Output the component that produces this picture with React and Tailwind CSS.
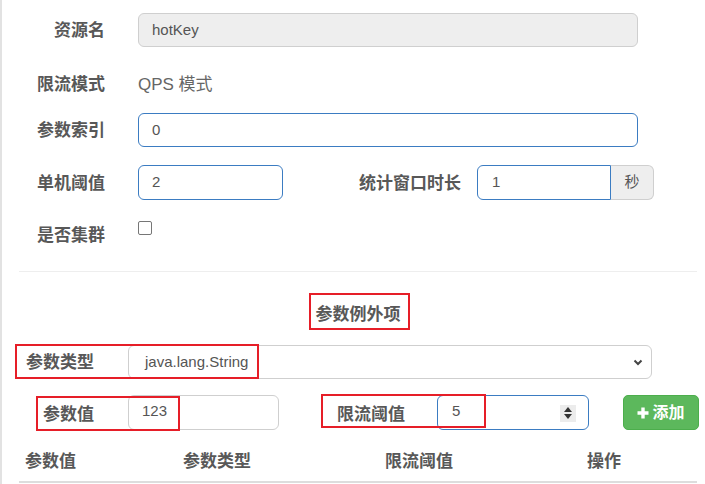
import React from "react";

const Label = ({ children, w = "w-[103px]" }) => (
  <div className={`${w} shrink-0 text-right text-[17px] font-bold text-[#585858] leading-[20px]`}>{children}</div>
);

export default function App() {
  return (
    <div className="relative w-[705px] h-[484px] overflow-hidden bg-white border-l-2 border-[#e2e2e2] font-['Liberation_Sans','Noto_Sans_CJK_SC',sans-serif]">
      <div className="flex flex-col pt-[13px]">
        {/* 资源名 */}
        <div className="flex items-center h-[34px]">
          <div className="mt-[2px]"><Label>资源名</Label></div>
          <div className="ml-[33px] w-[500px] h-[34px] flex items-center px-[13px] rounded-[6px] border border-[#cfcfcf] bg-[#eeeeee] text-[15px] text-[#555]">hotKey</div>
        </div>
        {/* 限流模式 */}
        <div className="flex items-center h-[34px] mt-[21px]">
          <Label>限流模式</Label>
          <div className="ml-[33px] text-[17px] text-[#666] leading-[20px]">QPS 模式</div>
        </div>
        {/* 参数索引 */}
        <div className="flex items-center h-[34px] mt-[11px]">
          <div className="mt-[2px]"><Label>参数索引</Label></div>
          <div className="ml-[33px] w-[500px] h-[34px] flex items-center px-[13px] rounded-[6px] border border-[#3b7cc2] bg-white text-[15px] text-[#555]">0</div>
        </div>
        {/* 单机阈值 / 统计窗口时长 */}
        <div className="flex items-center h-[35px] mt-[18px]">
          <div className="mt-[2px]"><Label>单机阈值</Label></div>
          <div className="ml-[33px] w-[145px] h-[35px] flex items-center px-[13px] rounded-[6px] border border-[#3b7cc2] bg-white text-[15px] text-[#555]">2</div>
          <div className="ml-[76px] mt-[2px] text-[17px] font-bold text-[#585858] leading-[20px] whitespace-nowrap">统计窗口时长</div>
          <div className="ml-[16px] flex h-[35px]">
            <div className="w-[134px] h-[35px] flex items-center px-[14px] rounded-l-[6px] border border-[#3b7cc2] bg-white text-[15px] text-[#555]">1</div>
            <div className="w-[43px] h-[35px] flex items-center justify-center rounded-r-[6px] border border-l-0 border-[#cfcfcf] bg-[#eeeeee] text-[15px] text-[#555]">秒</div>
          </div>
        </div>
        {/* 是否集群 */}
        <div className="flex items-start h-[34px] mt-[21px]">
          <div className="mt-[5px]"><Label>是否集群</Label></div>
          <div className="ml-[33px] w-[14px] h-[14px] rounded-[2px] border border-[#767676] bg-white"></div>
        </div>
        {/* divider */}
        <div className="ml-[17px] w-[678px] h-px bg-[#eeeeee] mt-[16px]"></div>
        {/* title */}
        <div className="ml-[17px] w-[678px] h-[34px] mt-[26px] flex items-center justify-center text-[17px] font-bold text-[#585858]">参数例外项</div>
        {/* 参数类型 */}
        <div className="flex items-center h-[34px] mt-[13px]">
          <div className="mt-[2px]"><Label w="w-[92px]">参数类型</Label></div>
          <div className="ml-[34px] w-[524px] h-[34px] flex items-center justify-between pl-[16px] pr-[8px] rounded-[6px] border border-[#cfcfcf] bg-white text-[15px] text-[#555]">
            <span>java.lang.String</span>
            <svg width="10" height="7" viewBox="0 0 10 7"><path d="M1.5 1.5 L5 5 L8.5 1.5" fill="none" stroke="#444" strokeWidth="2" /></svg>
          </div>
        </div>
        {/* 参数值 / 限流阈值 / 添加 */}
        <div className="flex items-center h-[35px] mt-[16px]">
          <div className="mt-[4px]"><Label w="w-[92px]">参数值</Label></div>
          <div className="ml-[34px] w-[151px] h-[35px] flex items-center pl-[13px] pb-[2px] rounded-[6px] border border-[#cfcfcf] bg-white text-[15px] text-[#555]">123</div>
          <div className="ml-[58px] mt-[4px] text-[17px] font-bold text-[#585858] leading-[20px] whitespace-nowrap">限流阈值</div>
          <div className="ml-[32px] w-[152px] h-[35px] flex items-center justify-between pl-[14px] pr-[12px] pb-[2px] rounded-[6px] border border-[#3b7cc2] bg-white text-[15px] text-[#555]">
            <span>5</span>
            <div className="w-[16px] h-[17px] mt-[3px] bg-[#ececec] flex flex-col items-center justify-center gap-[2px]">
              <svg width="8" height="5" viewBox="0 0 8 5"><path d="M0 5 L4 0 L8 5 Z" fill="#333" /></svg>
              <svg width="8" height="5" viewBox="0 0 8 5"><path d="M0 0 L4 5 L8 0 Z" fill="#333" /></svg>
            </div>
          </div>
          <div className="ml-[34px] w-[76px] h-[35px] flex items-center justify-center gap-[3px] rounded-[5px] border border-[#4cae4c] bg-[#5cb85c] text-white text-[16px] font-bold">
            <svg width="12" height="12" viewBox="0 0 12 12"><path d="M6 0.5 V11.5 M0.5 6 H11.5" stroke="#fff" strokeWidth="3.4" /></svg>
            <span>添加</span>
          </div>
        </div>
        {/* table header */}
        <div className="ml-[17px] w-[678px] mt-[20px] pb-[7px] border-b-2 border-[#dddddd] flex text-[17px] font-bold text-[#585858] leading-[24px]">
          <div className="w-[158px] pl-[6px]">参数值</div>
          <div className="w-[202px] pl-[6px]">参数类型</div>
          <div className="w-[202px] pl-[6px]">限流阈值</div>
          <div className="pl-[6px]">操作</div>
        </div>
      </div>

      {/* red annotation boxes */}
      <div className="absolute left-[307px] top-[293px] w-[101px] h-[37px] border-2 border-[#e61e28]"></div>
      <div className="absolute left-[13px] top-[344px] w-[244px] h-[35px] border-2 border-[#e61e28]"></div>
      <div className="absolute left-[34px] top-[396px] w-[144px] h-[35px] border-2 border-[#e61e28]"></div>
      <div className="absolute left-[319px] top-[394px] w-[165px] h-[34px] border-2 border-[#e61e28]"></div>
    </div>
  );
}
